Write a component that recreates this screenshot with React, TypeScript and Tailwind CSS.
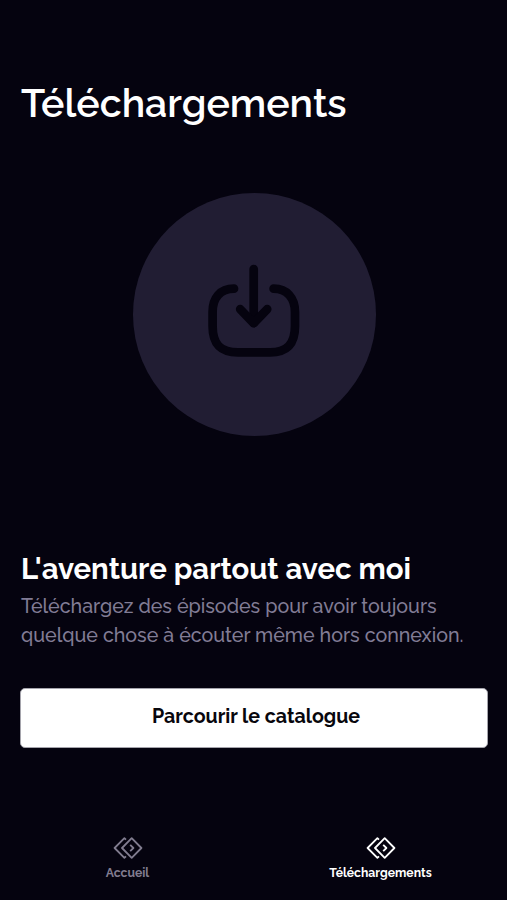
const tabs = [
  { label: 'Accueil', active: false },
  { label: 'Téléchargements', active: true },
];

function DownloadIcon() {
  return (
    <svg
      width="92"
      height="93"
      viewBox="0 0 92 93"
      fill="none"
      stroke="#05030f"
      strokeWidth="8.7"
      strokeLinecap="round"
      strokeLinejoin="round"
    >
      <path d="M26 24.7C12 24.7 4.6 34 4.6 48V62C4.6 80 12 88.3 30 88.3H62C79 88.3 87 80 87 62V48C87 34 79 24.7 65.6 24.7" />
      <path d="M45.7 5V59" />
      <path d="M32.2 45.2L45.7 59.2L59.2 45.2" />
    </svg>
  );
}

function TabIcon() {
  return (
    <svg width="30" height="22" viewBox="0 0 30 22" fill="none" stroke="currentColor" strokeWidth="1.8" strokeLinejoin="round">
      <path d="M18.7 1.2L28.4 11L18.7 20.8L9 11Z" />
      <path d="M13 2.6L11.4 1.2L1.6 11L11.4 20.8L13 19.4" />
      <path d="M17.2 7.8L20.4 11L17.2 14.2" />
    </svg>
  );
}

export default function App() {
  return (
    <div className="flex h-[900px] w-[507px] flex-col bg-[#05030f] font-['Raleway','Lato',sans-serif] text-white">
      <main className="flex flex-1 flex-col px-5 pt-[79px]">
        <h1 className="whitespace-nowrap pl-px text-[39.3px] leading-[48px] font-semibold">Téléchargements</h1>

        <div className="mt-[66px] ml-[112.5px] flex size-[243px] items-center justify-center rounded-full bg-[#211d33] pb-[9px]">
          <DownloadIcon />
        </div>

        <h2 className="mt-[115px] whitespace-nowrap pl-px text-[29.3px] leading-9 font-bold">
          L'aventure partout avec moi
        </h2>
        <p className="mt-[5px] whitespace-nowrap pl-px text-[19.65px] leading-[29px] font-medium text-[#817c95]">
          Téléchargez des épisodes pour avoir toujours
          <br />
          quelque chose à écouter même hors connexion.
        </p>

        <button className="mt-[38px] h-[60px] w-[468px] rounded-[5px] border border-[#a5a4ac] bg-white pb-[3px] pl-1 text-[19.6px] font-bold text-[#08070d]">
          Parcourir le catalogue
        </button>
      </main>

      <nav className="grid h-[63px] grid-cols-2 pl-px">
        {tabs.map((tab) => (
          <a
            key={tab.label}
            className={tab.active ? 'flex flex-col items-center text-white' : 'flex flex-col items-center text-[#817c8f]'}
          >
            <TabIcon />
            <span className="mt-1.5 text-[12.2px] leading-4 font-bold">{tab.label}</span>
          </a>
        ))}
      </nav>
    </div>
  );
}
